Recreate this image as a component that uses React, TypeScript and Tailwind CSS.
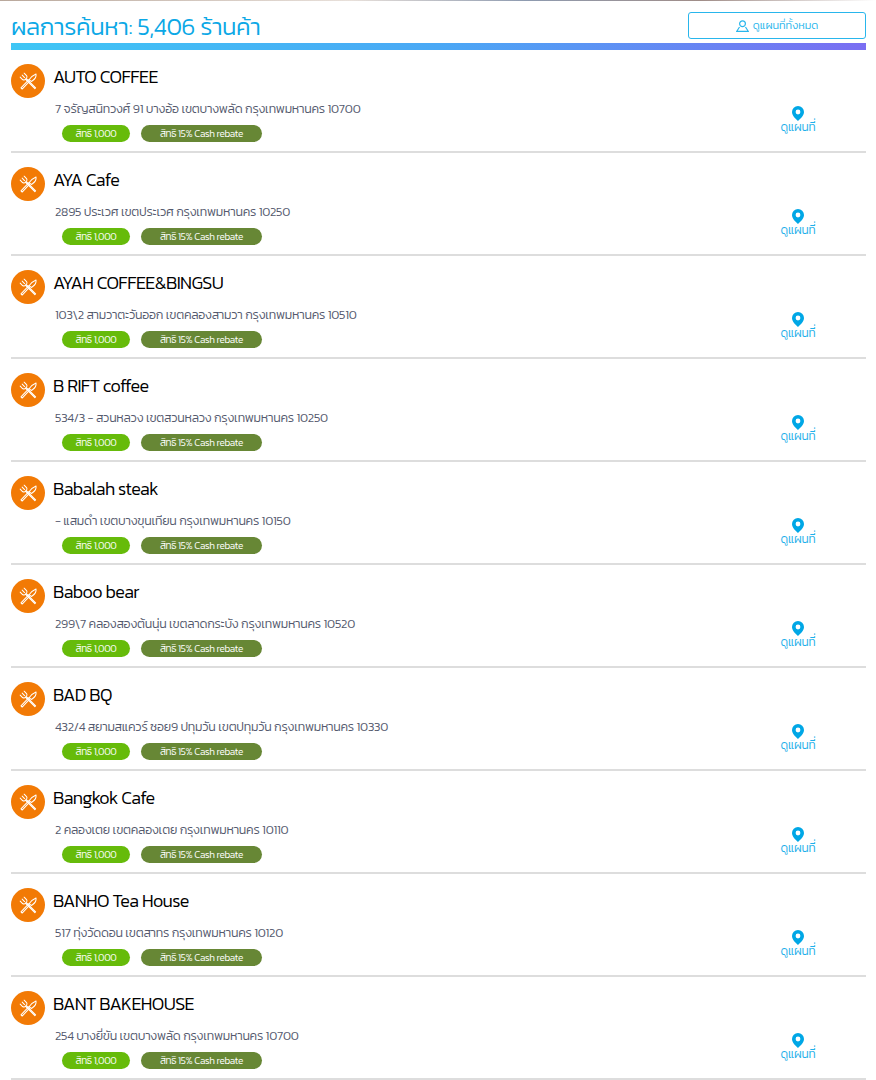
const shops = [
  { name: 'AUTO COFFEE', address: '7 จรัญสนิทวงศ์ 91 บางอ้อ เขตบางพลัด กรุงเทพมหานคร 10700' },
  { name: 'AYA Cafe', address: '2895 ประเวศ เขตประเวศ กรุงเทพมหานคร 10250' },
  { name: 'AYAH COFFEE&BINGSU', address: '103\\2 สามวาตะวันออก เขตคลองสามวา กรุงเทพมหานคร 10510' },
  { name: 'B RIFT coffee', address: '534/3 - สวนหลวง เขตสวนหลวง กรุงเทพมหานคร 10250' },
  { name: 'Babalah steak', address: '- แสมดำ เขตบางขุนเทียน กรุงเทพมหานคร 10150' },
  { name: 'Baboo bear', address: '299\\7 คลองสองต้นนุ่น เขตลาดกระบัง กรุงเทพมหานคร 10520' },
  { name: 'BAD BQ', address: '432/4 สยามสแควร์ ซอย9 ปทุมวัน เขตปทุมวัน กรุงเทพมหานคร 10330' },
  { name: 'Bangkok Cafe', address: '2 คลองเตย เขตคลองเตย กรุงเทพมหานคร 10110' },
  { name: 'BANHO Tea House', address: '517 ทุ่งวัดดอน เขตสาทร กรุงเทพมหานคร 10120' },
  { name: 'BANT BAKEHOUSE', address: '254 บางยี่ขัน เขตบางพลัด กรุงเทพมหานคร 10700' },
];

function CutleryIcon() {
  return (
    <svg width="19" height="19" viewBox="0 0 24 24" fill="none" stroke="white" strokeWidth="1.3" strokeLinecap="round" strokeLinejoin="round">
      {/* fork */}
      <path d="M1.5 6.5 L4.5 9.5 M4 4 L7 7 M6.5 1.5 L9.5 4.5 M4.5 9.5 C6 10.5 7.5 10 8 9 M9.5 4.5 C10.5 6 10 7.5 9 8 M8 9 L20 21 L21 20 L9 8" />
      {/* knife */}
      <path d="M21.5 2.5 C22 6 20 9 17 11 L15.5 12 L13 9.5 C15 6.5 18 4 21.5 2.5 Z M14 11 L4 21.5 L2.5 20 L12.5 9.5" />
    </svg>
  );
}

function PinIcon() {
  return (
    <svg width="12" height="15" viewBox="0 0 12 15">
      <path fillRule="evenodd" fill="#00a7e6" d="M6 0a6 6 0 0 1 6 6c0 3.4-3.4 6.7-6 9-2.6-2.3-6-5.6-6-9a6 6 0 0 1 6-6Zm0 3.6a2.4 2.4 0 1 0 0 4.8 2.4 2.4 0 0 0 0-4.8Z" />
    </svg>
  );
}

function MapUserIcon() {
  return (
    <svg width="13" height="12" viewBox="0 0 13 12" fill="none" stroke="#29b6ec" strokeWidth="1.2">
      <circle cx="6.5" cy="3.8" r="2.9" />
      <path d="M3.5 7 L0.8 11.3 H12.2 L9.5 7" />
    </svg>
  );
}

function ShopRow({ name, address }: { name: string; address: string }) {
  return (
    <div className="flex h-[103px] border-b-2 border-[#dddddd]">
      <div className="flex-1 pt-[14px]">
        <div className="flex items-start">
          <div className="flex h-[34px] w-[34px] items-center justify-center rounded-full bg-[#f27a05]">
            <CutleryIcon />
          </div>
          <div className="ml-[8px] text-[18px] font-light leading-[25px] tracking-[-0.6px] text-black">{name}</div>
        </div>
        <div className="ml-[44px] mt-[1px] text-[12.5px] font-light leading-[20px] tracking-[-0.25px] text-[#555a6e]">{address}</div>
        <div className="mt-[6px] ml-[51px] flex gap-[11px]">
          <div className="flex h-[17px] w-[68px] items-center justify-center rounded-full bg-[#66bb0a] text-[10px] font-light tracking-[-0.35px] text-white">สิทธิ 1,000</div>
          <div className="flex h-[17px] w-[121px] items-center justify-center rounded-full bg-[#678735] text-[10px] font-light tracking-[-0.35px] text-white">สิทธิ 15% Cash rebate</div>
        </div>
      </div>
      <div className="flex w-[136px] flex-col items-center pt-[56px]">
        <PinIcon />
        <div className="mt-[-2px] text-[12px] font-light leading-[16px] tracking-[-0.2px] text-[#1fb0ea]">ดูแผนที่</div>
      </div>
    </div>
  );
}

export default function App() {
  return (
    <div className="min-h-[1080px] bg-white font-['Kanit','Noto_Sans','Noto_Sans_Thai','Open_Sans',sans-serif]">
      <div className="h-[1px] bg-[linear-gradient(90deg,#b9a89c,#e8e0da_40%,#8e9bb0_60%,#a08d88_80%,#ffffff)]" />
      <div className="px-[11px] pr-[10px]">
        <div className="flex h-[42px] items-start justify-between">
          <div className="mt-[9px] text-[24px] font-light leading-[33px] tracking-[-0.33px] text-[#0ba8e6]">ผลการค้นหา: 5,406 ร้านค้า</div>
          <button className="mt-[11px] flex h-[27px] w-[178px] items-center justify-center gap-[4px] rounded-[3px] border border-[#29b6ec] text-[11px] font-light text-[#29b6ec]">
            <MapUserIcon />
            ดูแผนที่ทั้งหมด
          </button>
        </div>
        <div className="h-[7px] bg-[linear-gradient(90deg,#3fc6f5,#4aa8f5,#7a6ef2)]" />
        {shops.map((shop) => (
          <ShopRow key={shop.name} name={shop.name} address={shop.address} />
        ))}
      </div>
    </div>
  );
}
